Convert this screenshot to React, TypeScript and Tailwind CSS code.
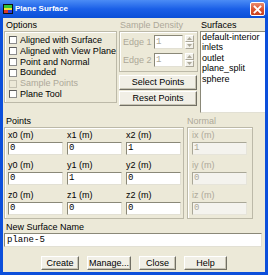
import React from "react";

function Check({ label, disabled }: { label: string; disabled?: boolean }) {
  return (
    <div className="flex items-center h-[10.8px]">
      <span
        className={
          disabled
            ? "ml-[4px] w-[8px] h-[8px] border border-[#c4c1b2] bg-[#ece9d8] shrink-0"
            : "ml-[4px] w-[8px] h-[8px] border border-t-[#5c5c5c] border-l-[#5c5c5c] border-b-[#8d8d8d] border-r-[#8d8d8d] bg-white shrink-0"
        }
      />
      <span className={disabled ? "ml-[3px] text-[#aca899] whitespace-nowrap" : "ml-[3px] text-black whitespace-nowrap"}>
        {label}
      </span>
    </div>
  );
}

function Spinner() {
  return (
    <div className="ml-[2px] w-[9px] h-[14px] flex flex-col">
      <div className="h-[7px] flex items-center justify-center bg-[#f2f1ea] border border-t-white border-l-white border-b-[#aca899] border-r-[#aca899]">
        <svg width="5" height="3" viewBox="0 0 5 3">
          <path d="M0 3 L2.5 0 L5 3 Z" fill="#aca899" />
        </svg>
      </div>
      <div className="h-[7px] flex items-center justify-center bg-[#f2f1ea] border border-t-white border-l-white border-b-[#aca899] border-r-[#aca899]">
        <svg width="5" height="3" viewBox="0 0 5 3">
          <path d="M0 0 L2.5 3 L5 0 Z" fill="#aca899" />
        </svg>
      </div>
    </div>
  );
}

function EdgeRow({ label }: { label: string }) {
  return (
    <div className="flex items-center h-[14px]">
      <span className="w-[31px] text-[#aca899] whitespace-nowrap">{label}</span>
      <div className="w-[29px] h-[14px] bg-white border border-t-[#8a8878] border-l-[#8a8878] border-b-[#e2e0d4] border-r-[#e2e0d4] pl-[1px] text-[#aca899] font-['Liberation_Mono',monospace] leading-[12px]">
        1
      </div>
      <Spinner />
    </div>
  );
}

function PointCell({ label, value, disabled }: { label: string; value: string; disabled?: boolean }) {
  return (
    <div className="flex flex-col">
      <div className={disabled ? "h-[11px] text-[#aca899] whitespace-nowrap" : "h-[11px] text-black whitespace-nowrap"}>{label}</div>
      <div
        className={
          disabled
            ? "mt-[1px] w-[55px] h-[13px] bg-[#f4f3ee] border border-t-[#a9a797] border-l-[#a9a797] border-b-[#e6e4da] border-r-[#e6e4da] pl-[1px] text-[#aca899] font-['Liberation_Mono',monospace] leading-[11px]"
            : "mt-[1px] w-[55px] h-[13px] bg-white border border-t-[#8a8878] border-l-[#8a8878] border-b-[#e2e0d4] border-r-[#e2e0d4] pl-[1px] text-black font-['Liberation_Mono',monospace] leading-[11px]"
        }
      >
        {value}
      </div>
    </div>
  );
}

function Btn({ label, w }: { label: string; w: string }) {
  return (
    <div
      className={`${w} h-[14px] flex items-center justify-center bg-[#f1efe6] border border-t-white border-l-white border-b-[#716f64] border-r-[#716f64] shadow-[inset_-1px_-1px_0_#c7c4b4] whitespace-nowrap`}
    >
      {label}
    </div>
  );
}

export default function App() {
  const surfaces = ["default-interior", "inlets", "outlet", "plane_split", "sphere"];
  return (
    <div className="w-[268px] h-[275px] bg-[#0c4fdb] flex flex-col font-['Liberation_Sans',Arial,sans-serif] text-[9px] leading-[11px] text-black overflow-hidden">
      {/* Title bar */}
      <div className="h-[18px] shrink-0 flex items-center bg-gradient-to-b from-[#4b8cf5] via-[#1a5fe7] to-[#0a4fd7] pl-[3px] pr-[3px]">
        <svg width="10" height="10" viewBox="0 0 10 10" className="shrink-0">
          <rect x="0" y="0" width="10" height="10" fill="#101010" />
          <rect x="1" y="1" width="8" height="3" fill="#2fc43a" />
          <rect x="1" y="4" width="8" height="2" fill="#e8e23a" />
          <rect x="1" y="6" width="4" height="3" fill="#d83a2a" />
          <rect x="5" y="6" width="4" height="3" fill="#2a3ad8" />
        </svg>
        <span className="ml-[2px] text-white font-bold text-[8px] leading-[10px] whitespace-nowrap">Plane Surface</span>
        <div className="ml-auto w-[15px] h-[14px] rounded-[2px] border border-white bg-gradient-to-b from-[#e98a6c] via-[#dc5632] to-[#c8401e] flex items-center justify-center">
          <svg width="9" height="9" viewBox="0 0 9 9">
            <path d="M1.5 1.5 L7.5 7.5 M7.5 1.5 L1.5 7.5" stroke="#fff" strokeWidth="1.8" strokeLinecap="square" />
          </svg>
        </div>
      </div>

      {/* Body */}
      <div className="flex-1 mx-[3px] mb-[3px] bg-[#ece9d8] flex flex-col overflow-hidden">
        {/* Top row */}
        <div className="flex pt-[2px] h-[95px] shrink-0">
          <div className="ml-[1px] w-[113px] flex flex-col">
            <div className="h-[11px] pl-[2px]">Options</div>
            <div className="h-[72px] border border-[#bcb9a8] shadow-[inset_1px_1px_0_#ffffff] pt-[3px] flex flex-col">
              <Check label="Aligned with Surface" />
              <Check label="Aligned with View Plane" />
              <Check label="Point and Normal" />
              <Check label="Bounded" />
              <Check label="Sample Points" disabled />
              <Check label="Plane Tool" />
            </div>
          </div>

          <div className="ml-[2px] w-[79px] flex flex-col">
            <div className="h-[11px] pl-[1px] text-[#aca899] whitespace-nowrap">Sample Density</div>
            <div className="h-[41px] border border-[#bcb9a8] shadow-[inset_1px_1px_0_#ffffff] pl-[3px] pt-[3px] flex flex-col gap-[4px]">
              <EdgeRow label="Edge 1" />
              <EdgeRow label="Edge 2" />
            </div>
            <div className="mt-[3px]">
              <Btn label="Select Points" w="w-[78px] h-[15px]" />
            </div>
            <div className="mt-[1px]">
              <Btn label="Reset Points" w="w-[78px] h-[15px]" />
            </div>
          </div>

          <div className="ml-[2px] flex-1 flex flex-col mr-[-4px]">
            <div className="h-[11px] pl-[1px]">Surfaces</div>
            <div className="h-[82px] bg-white border border-t-[#8a8878] border-l-[#8a8878] border-b-[#e2e0d4] border-r-[#e2e0d4] pl-[1px] flex flex-col">
              {surfaces.map((s) => (
                <div key={s} className="h-[10.4px] leading-[10.4px] whitespace-nowrap">
                  {s}
                </div>
              ))}
            </div>
          </div>
        </div>

        {/* Points row */}
        <div className="flex mt-[3px] shrink-0">
          <div className="ml-[1px] w-[180px] flex flex-col">
            <div className="h-[11px] pl-[2px]">Points</div>
            <div className="border border-[#bcb9a8] shadow-[inset_1px_1px_0_#ffffff] pl-[3px] pr-[2px] pt-[2px] pb-[3px] grid grid-cols-3 gap-x-[4px] gap-y-[5px]">
              <PointCell label="x0 (m)" value="0" />
              <PointCell label="x1 (m)" value="0" />
              <PointCell label="x2 (m)" value="1" />
              <PointCell label="y0 (m)" value="0" />
              <PointCell label="y1 (m)" value="1" />
              <PointCell label="y2 (m)" value="0" />
              <PointCell label="z0 (m)" value="0" />
              <PointCell label="z1 (m)" value="0" />
              <PointCell label="z2 (m)" value="0" />
            </div>
          </div>
          <div className="ml-[3px] w-[66px] flex flex-col">
            <div className="h-[11px] text-[#aca899]">Normal</div>
            <div className="border border-[#bcb9a8] shadow-[inset_1px_1px_0_#ffffff] pl-[4px] pr-[4px] pt-[2px] pb-[3px] flex flex-col gap-y-[5px]">
              <PointCell label="ix (m)" value="1" disabled />
              <PointCell label="iy (m)" value="0" disabled />
              <PointCell label="iz (m)" value="0" disabled />
            </div>
          </div>
        </div>

        {/* New surface name */}
        <div className="mt-[3px] h-[11px] pl-[3px] shrink-0">New Surface Name</div>
        <div className="ml-[1px] w-[258px] h-[14px] shrink-0 bg-white border border-t-[#8a8878] border-l-[#8a8878] border-b-[#e2e0d4] border-r-[#e2e0d4] pl-[2px] font-['Liberation_Mono',monospace] leading-[12px]">
          plane-5
        </div>

        {/* Buttons */}
        <div className="mt-[9px] flex justify-center gap-[8px] shrink-0">
          <Btn label="Create" w="w-[38px]" />
          <Btn label="Manage..." w="w-[44px]" />
          <Btn label="Close" w="w-[37px]" />
          <Btn label="Help" w="w-[43px]" />
        </div>
      </div>
    </div>
  );
}
